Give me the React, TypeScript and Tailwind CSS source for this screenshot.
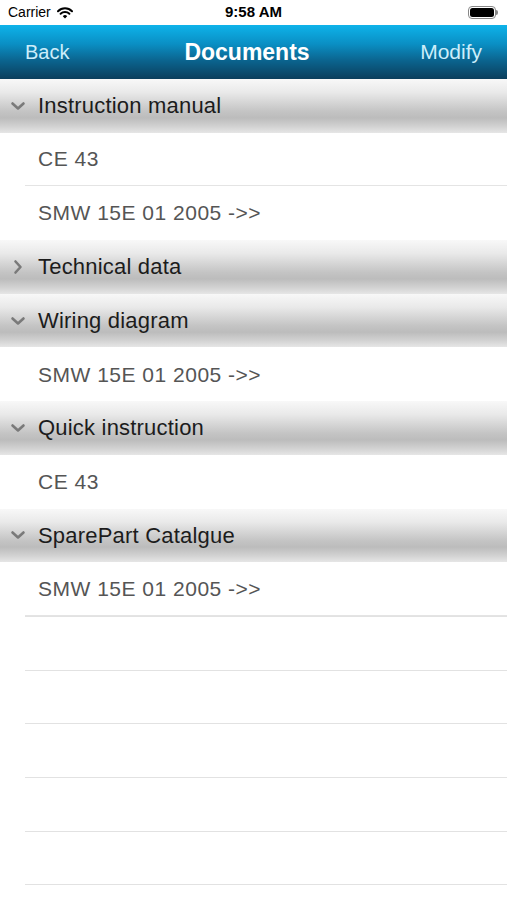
import React from "react";

type Section = { title: string; open: boolean; items: string[] };

const sections: Section[] = [
  { title: "Instruction manual", open: true, items: ["CE 43", "SMW 15E 01 2005 ->>"] },
  { title: "Technical data", open: false, items: [] },
  { title: "Wiring diagram", open: true, items: ["SMW 15E 01 2005 ->>"] },
  { title: "Quick instruction", open: true, items: ["CE 43"] },
  { title: "SparePart Catalgue", open: true, items: ["SMW 15E 01 2005 ->>"] },
];

const Chevron = ({ open }: { open: boolean }) => (
  <svg width="16" height="16" viewBox="0 0 16 16" className="shrink-0">
    {open ? (
      <path d="M2.5 5.5 L8 10.5 L13.5 5.5" fill="none" stroke="#7a7a7a" strokeWidth="2.6" strokeLinecap="round" strokeLinejoin="round" />
    ) : (
      <path d="M5.5 2.5 L10.5 8 L5.5 13.5" fill="none" stroke="#7a7a7a" strokeWidth="2.6" strokeLinecap="round" strokeLinejoin="round" />
    )}
  </svg>
);

const Header = ({ s }: { s: Section }) => (
  <div className="h-[53.7px] flex items-center gap-[12px] pl-[10px] bg-[linear-gradient(to_bottom,#f8f8f8_0%,#e9e9e9_25%,#c4c4c4_60%,#bcbcbc_72%,#d2d2d2_88%,#e6e6e6_100%)]">
    <Chevron open={s.open} />
    <span className="text-[22px] text-[#1c1c1c] tracking-[0.2px]">{s.title}</span>
  </div>
);

const Cell = ({ text, last }: { text: string; last: boolean }) => (
  <div className="h-[53.7px] flex flex-col bg-white">
    <div className="flex-1 flex items-center pl-[38px] text-[21px] text-[#555] tracking-[0.5px]">{text}</div>
    {!last && <div className="ml-[25px] h-px bg-[#e4e4e4]" />}
  </div>
);

const EmptyRow = () => (
  <div className="h-[53.7px] flex flex-col justify-start bg-white">
    <div className="ml-[25px] h-px bg-[#e2e2e2]" />
  </div>
);

export default function App() {
  return (
    <div className="w-[507px] h-[900px] overflow-hidden bg-white font-['Liberation_Sans',Arial,sans-serif]">
      {/* status bar */}
      <div className="h-[25px] flex items-center justify-between px-[8px] bg-white text-black">
        <div className="flex items-center gap-[6px] w-[120px]">
          <span className="text-[14px]">Carrier</span>
          <svg width="16" height="12" viewBox="0 0 16 12">
            <path d="M1 4.2 A10 10 0 0 1 15 4.2" fill="none" stroke="#000" strokeWidth="2" strokeLinecap="round" />
            <path d="M3.6 6.8 A6.4 6.4 0 0 1 12.4 6.8" fill="none" stroke="#000" strokeWidth="2" strokeLinecap="round" />
            <path d="M8 11.5 L5.8 9.2 A3 3 0 0 1 10.2 9.2 Z" fill="#000" />
          </svg>
        </div>
        <span className="text-[15px] font-bold">9:58 AM</span>
        <div className="w-[120px] flex justify-end items-center pr-[1px]">
          <div className="w-[28px] h-[13px] rounded-[4px] border border-[#888] p-[1px]">
            <div className="w-full h-full rounded-[2.5px] bg-black" />
          </div>
          <div className="w-[2px] h-[5px] bg-[#888] rounded-r-sm" />
        </div>
      </div>

      {/* nav bar */}
      <div className="h-[54px] flex items-center justify-between px-[25px] bg-[linear-gradient(to_bottom,#0eb3ea_0%,#0a8fc4_35%,#0b6590_65%,#0b3e5c_100%)]">
        <span className="text-[20px] text-[#cdeefb] w-[90px]">Back</span>
        <span className="text-[23px] font-bold text-white pr-[13px]">Documents</span>
        <span className="text-[21px] text-[#cdeefb] w-[90px] text-right">Modify</span>
      </div>

      {/* table */}
      <div className="flex flex-col">
        {sections.map((s) => (
          <React.Fragment key={s.title}>
            <Header s={s} />
            {s.items.map((it, i) => (
              <Cell key={i} text={it} last={i === s.items.length - 1 && s.title !== "SparePart Catalgue"} />
            ))}
          </React.Fragment>
        ))}
        {Array.from({ length: 6 }).map((_, i) => (
          <EmptyRow key={i} />
        ))}
      </div>
    </div>
  );
}
